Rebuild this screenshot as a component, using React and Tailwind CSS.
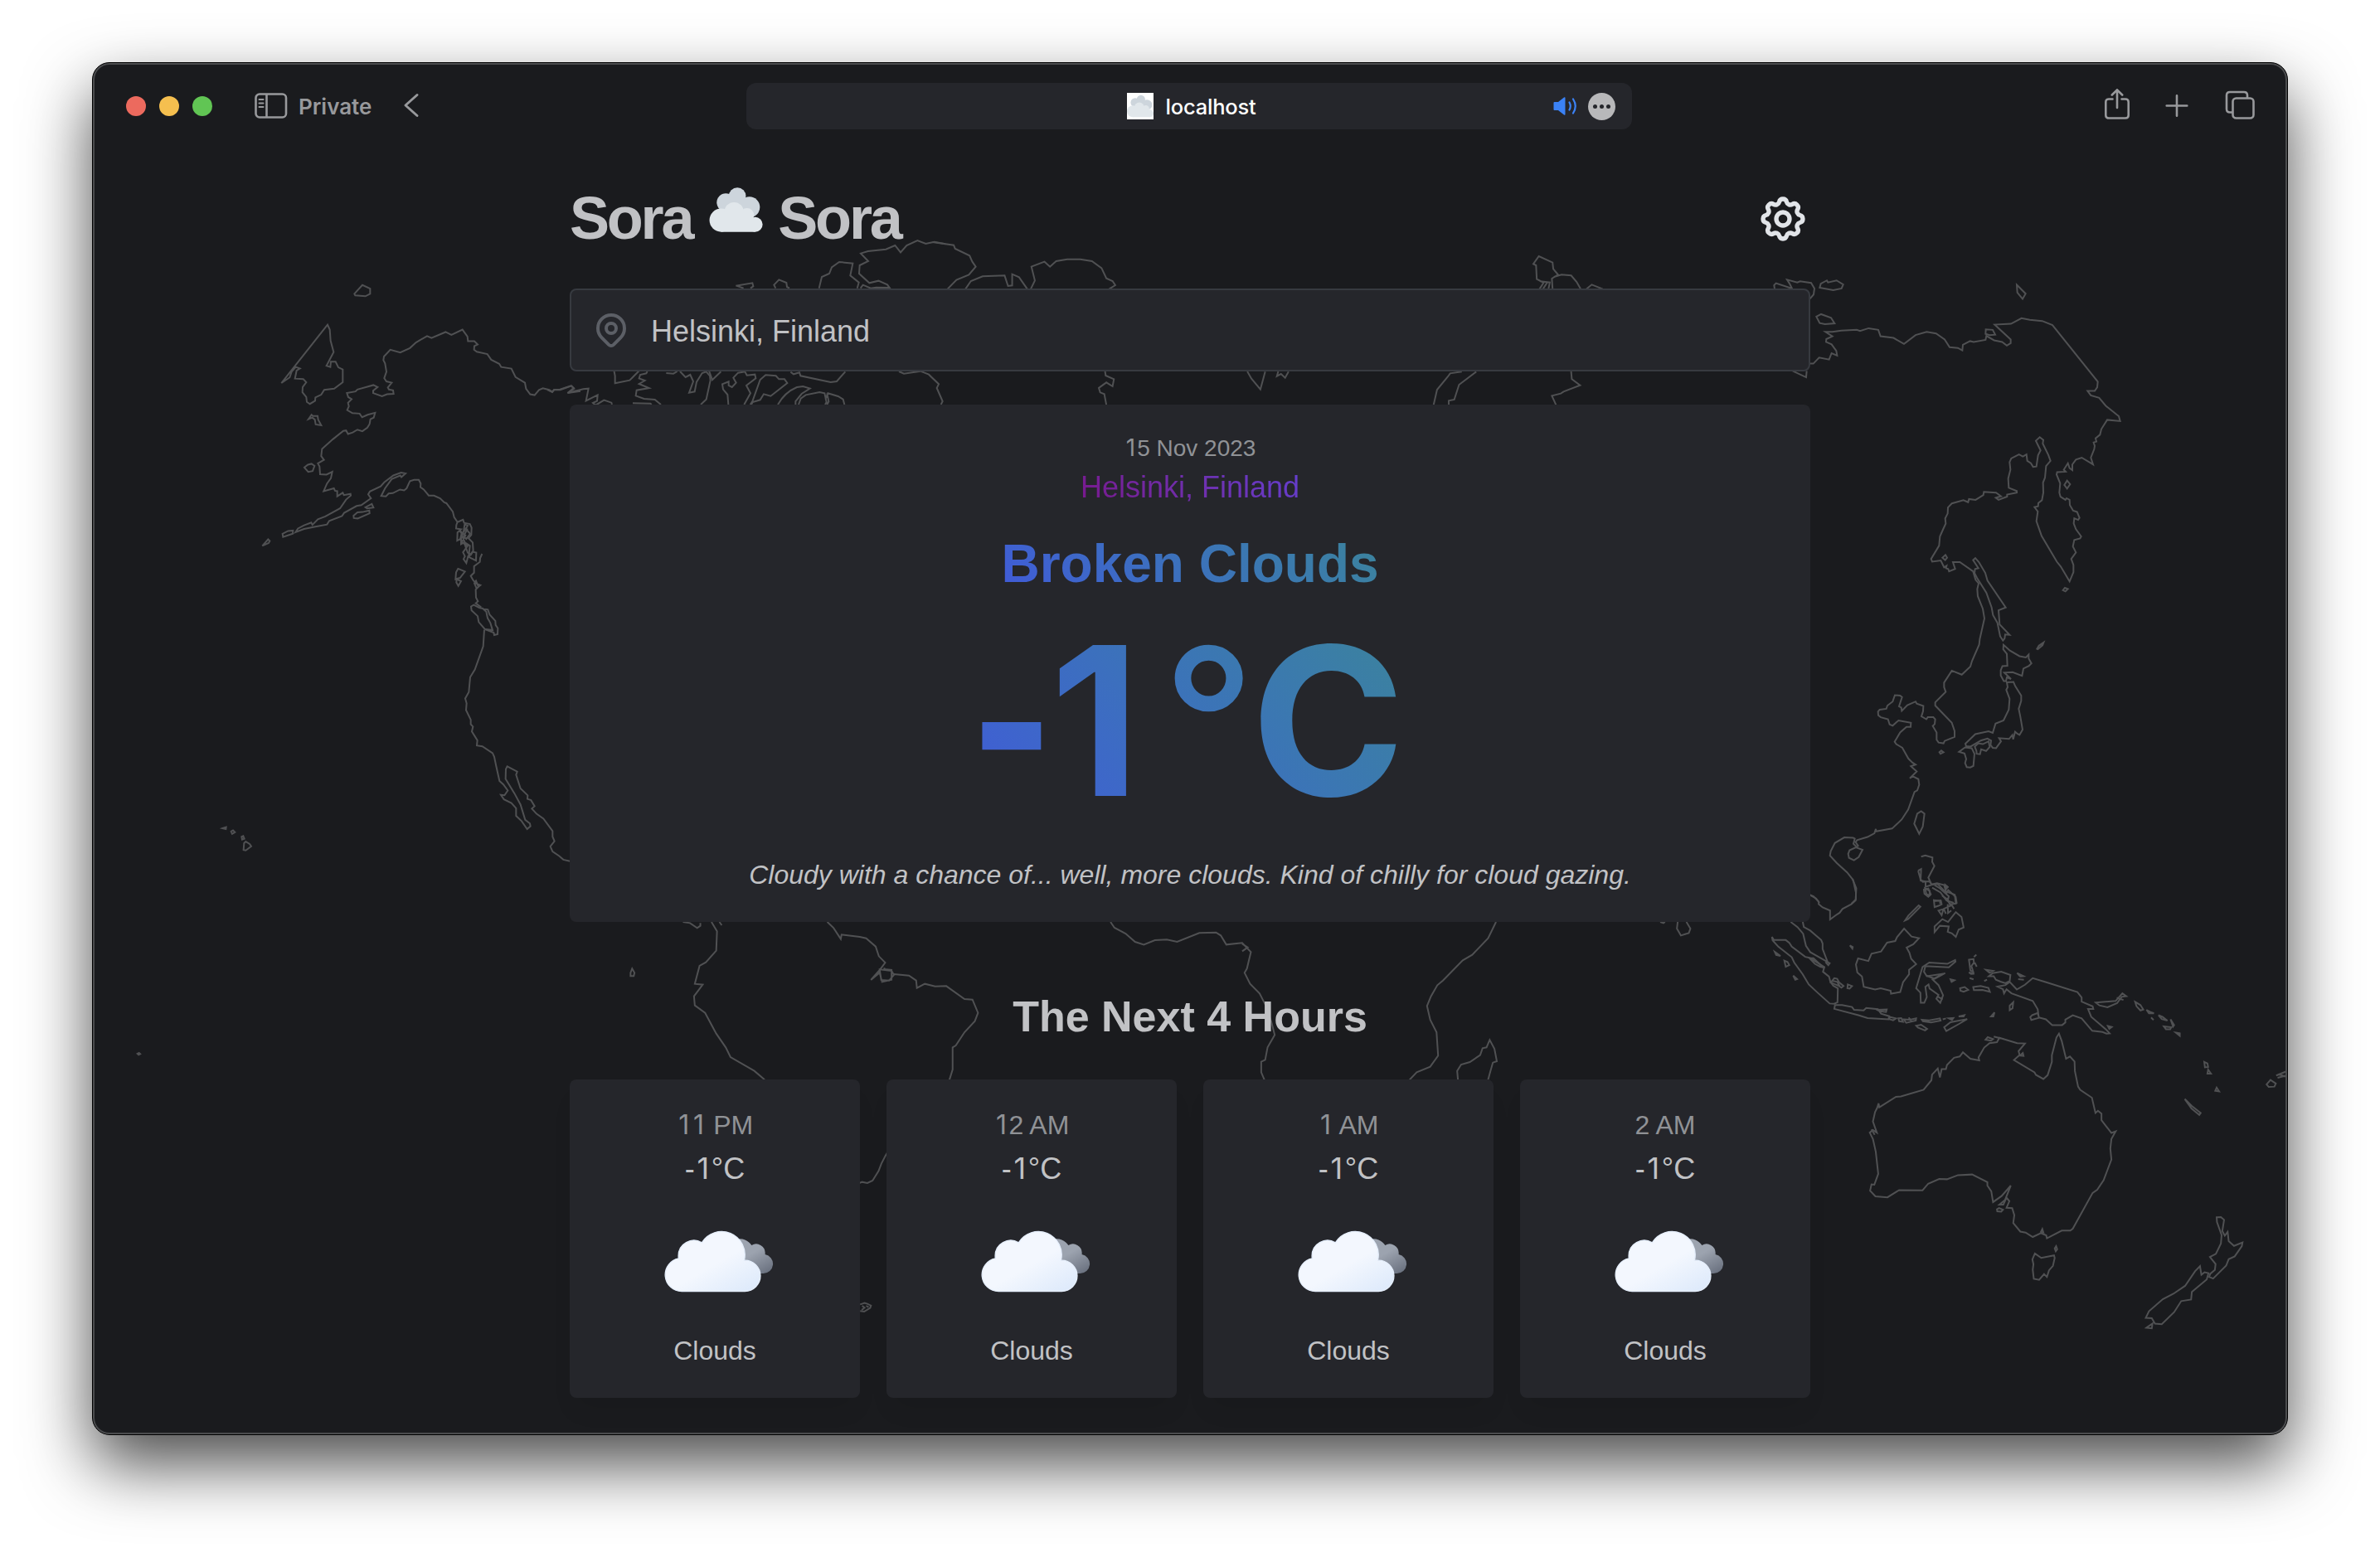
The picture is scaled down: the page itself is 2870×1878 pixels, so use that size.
import React from "react";
import { TbSettings, TbMapPin } from "react-icons/tb";

/* Each coastline group keeps its own local grid; `t` places it on the map. */
const COASTS = [
  {
    t: "translate(200 320) scale(.33333 .48469)",
    d: [
      "M682 71L711 49L739 58V71L722 77L685 75Z",
      "M585 148L593 160L596 188L607 216L581 250L595 253L597 240H614L624 254L640 259V291L609 307L573 310L562 322L541 329L540 337L521 345L510 340L508 328L494 316L495 303L508 291L497 283L467 282L473 262L485 257L470 253L455 265L448 279L418 293L470 248Z",
      "M516 383L527 372L532 375H549L551 384L562 398L542 396L539 384L530 379Z",
      "M1500 313L1453 318L1477 307L1468 300L1427 310H1405L1398 315L1387 310L1364 306L1350 310L1334 323L1318 321L1303 307L1299 292L1265 278L1250 257L1213 253L1206 245L1177 235L1163 221L1125 215L1115 210L1116 201L1128 197L1116 189H1093L1091 177L1073 160L1033 173L1012 166L961 181L945 176L905 192L883 206L848 217L812 210L789 227L787 236L793 244L798 265L790 281L798 289L817 292L803 304L807 309L822 311L824 320L800 321L782 326L750 318V312L766 303L751 298L693 309L686 314L655 318L660 328L672 333L659 342L662 351L656 360L675 368L701 369L710 378L730 372L757 367L752 379L740 383L737 395L729 404L711 413L693 409L676 416L659 420L652 411L642 412L604 433L565 457L562 475L572 484L550 493L556 501L558 520L581 521L602 514L597 530L583 543L571 562L608 555L612 561L620 562V575L640 566L644 572L668 569L669 573L652 583L630 605L577 625L550 632L530 646L526 640L500 647L478 655L469 664L500 656L545 650L583 645L591 636L637 624L645 616L690 599L707 597L742 580L732 570L738 563L777 550L790 540L823 523L851 516L867 518L852 527L848 523L817 532L793 555L779 574L796 575L806 568L821 567L847 558L862 560L871 555L883 537L898 534H915L922 543L921 552L933 558L951 573H970L992 580L1007 590L1015 592L1038 613L1043 627L1055 639",
      "M501 503L514 496L527 494L538 499L531 512L515 514Z",
      "M422 668L442 661L460 660L459 668L424 676Z",
      "M349 698L370 682L376 686L372 691Z",
      "M679 623L693 615L711 614L736 610L737 617L694 630L680 629Z",
      "M722 602L745 594L751 603L728 605Z",
      "M1055 639L1075 633L1079 641L1100 644L1106 653L1105 671L1095 679L1110 690L1112 711L1104 720L1092 715L1079 690L1068 694V680L1054 685L1055 665L1068 657L1050 655L1051 646Z",
      "M1062 660L1084 672L1071 688L1091 699L1075 714L1082 724L1077 731L1087 741L1093 725L1122 735L1123 715L1109 713L1095 727L1100 698L1082 690L1070 671L1092 648L1081 645L1077 663L1064 684L1070 667Z M1084 655L1101 668L1087 681L1077 675L1090 657Z",
      "M1144 718L1137 729L1136 738L1115 749V765L1103 773L1112 784L1123 792L1138 796L1124 804L1116 791L1122 785L1131 800L1121 807L1122 827L1129 836L1121 841L1141 851",
      "M1057 755L1082 762L1064 778L1048 781L1050 764Z M1052 781L1068 786L1058 798L1051 789Z",
      "M1104 849L1114 845L1134 852L1165 857L1171 869L1192 885L1193 895L1201 903L1200 918L1188 920L1186 914L1155 906L1132 888L1128 873L1106 859Z M1145 853L1159 862L1164 878L1174 890L1182 908L1152 905",
      "M1152 907L1148 948L1118 1006L1101 1025L1096 1062L1083 1078L1088 1090L1086 1107L1103 1131V1142L1111 1148L1107 1160L1127 1182L1125 1195L1145 1197L1182 1214L1188 1223L1195 1246L1207 1283L1221 1292L1237 1307L1225 1319L1212 1318L1223 1329L1250 1338L1267 1351V1370L1287 1383L1307 1403L1319 1396L1317 1389L1300 1380L1283 1342L1261 1314L1229 1278L1230 1254L1235 1247L1271 1260L1267 1268L1283 1302L1309 1319L1308 1328L1321 1331L1334 1346L1324 1352L1341 1365L1366 1377L1399 1408V1422L1406 1433L1391 1446L1399 1459L1423 1470L1438 1479L1462 1483",
      "M205 1401L218 1398L217 1403Z M236 1409L243 1406L250 1411L240 1415Z M274 1422L280 1420L284 1427L276 1429Z M283 1438L289 1434L303 1440L309 1446L289 1456L281 1455Z",
    ],
  },
  {
    t: "translate(660 200) scale(.33333)",
    d: [
      "M0 810L18 819L24 810L46 809L85 796L95 804L75 821L130 808L149 806L140 850L182 829L180 851L165 858L175 866L205 848L232 857L234 864",
      "M241 740L245 760V787L298 776L332 742",
      "M362 744L358 751L336 756L332 769L353 777L332 789L368 804L323 812L320 832L350 843L389 846L411 864",
      "M309 859L373 860L377 864",
      "M430 750L456 752L470 744M480 744L500 765L517 756L528 780L513 821L533 817L540 782L560 750L575 745L588 760L590 776L575 845L555 864",
      "M585 742L597 775L628 745",
      "M655 864L652 828L636 809L633 790L656 781V795L668 801L683 785L673 767L690 749L715 745L722 758L751 755L754 769L720 795L735 823L712 864",
      "M734 864L742 852L770 774L790 757L827 760L838 772H858L868 786L808 833L783 826L770 847L743 855L738 864",
      "M834 864C850 835 870 815 903 801L925 798L950 806L920 825L898 852V864",
      "M909 864L917 842L935 829L985 819L1003 823L1010 855L1005 864M1006 845L1015 823L1052 834L1070 845L1075 864M1012 864L1018 853L1012 823",
      "M880 746L891 754L912 748L916 760L1025 783L1047 780L1078 745",
      "M682 434L742 424L745 436L735 443M684 434L710 443",
      "M826 443L820 431L838 412L865 423L867 438L876 443",
      "M983 443L993 402L1020 390L1029 367L1056 348L1105 353L1096 397L1127 422L1121 443M1133 443L1142 431L1170 443L1190 440L1238 441L1230 430L1198 416L1165 424L1128 390L1130 360L1161 345L1134 317L1160 309L1225 302L1258 288L1278 313L1300 288L1339 270L1369 282L1400 275L1440 283",
      "M1272 744L1290 752L1350 743L1380 755L1416 790L1409 804L1430 852L1424 864",
    ],
  },
  {
    t: "translate(680 270) scale(.82908 .33333)",
    d: [
      "M536 66L567 77L569 90L590 115L594 137L599 155L589 184L571 203L558 236",
      "M584 236L592 207L609 190L641 187L646 225L652 223V182L662 193L674 236",
      "M679 236L685 205L680 155L699 137L707 155L716 135L732 128H751L768 135L782 160L789 197L798 207L802 222L793 236",
      "M787 532L788 549L800 562L798 588L789 574L778 594L780 610L786 616L789 655",
      "M994 534L1000 560L1013 599L1020 535M1039 534L1037 551L1043 543L1049 557L1054 535",
      "M1419 236L1425 213L1415 200L1414 150L1410 145L1418 117L1438 140L1439 163L1446 184L1437 198L1438 236M1420 208L1434 212L1432 236M1424 236L1430 213M1440 192L1451 184L1465 187L1473 210L1479 236M1487 236L1495 220L1511 236",
      "M1265 655L1270 600L1286 552L1289 541L1306 535M1327 535L1302 582L1295 636L1287 640V655M1465 534L1466 562L1478 584L1454 607L1450 614L1437 622L1443 655",
    ],
  },
  {
    t: "translate(2100 330) scale(.33333 .48469)",
    d: [
      "M120 38L118 29L125 24L183 37L174 25L165 15L202 22L212 19L252 23L264 37L261 52L247 63",
      "M283 35L287 25L309 17L313 22L344 17L368 27L362 37L332 41Z",
      "M271 107L288 101L324 110L337 124L302 126L283 123Z",
      "M996 28L1028 50L1017 63L998 47Z",
      "M185 242L234 258L236 242M247 224H260L281 209L317 214L326 198L346 204L343 192L326 176L306 170L307 163L329 156L304 145H329L361 142L417 140L429 143L460 136L495 140L503 156L550 160L588 175L630 153L670 145L704 149L735 164L753 183L783 185L799 191L801 177L827 168L840 170L883 165L886 155L914 166L943 170L960 179L974 173V164L916 127L975 125L1013 111L1043 115L1088 118L1125 128L1289 269L1287 283L1278 292H1252L1264 303L1294 309L1318 329L1365 355L1370 367L1323 364L1302 387L1297 401L1281 410L1284 418L1274 420L1278 429L1276 437L1264 458L1272 475L1231 458L1210 463L1197 475V489L1187 484L1181 472L1166 488L1173 493L1142 494L1140 500L1153 522L1150 545L1154 555L1172 563L1176 559L1187 563L1188 576L1200 590L1214 593L1223 608L1218 613L1204 609L1202 622L1210 636L1229 654L1225 659L1204 663L1199 679L1210 694L1193 710L1201 725V743L1187 766L1155 729L1141 717L1086 653L1067 616L1072 592L1060 581L1073 579L1074 571L1087 564L1092 545L1091 520L1098 508L1102 479L1118 466L1110 451L1090 423L1092 414L1079 407L1065 416L1082 440L1073 452L1067 480L1055 481L1047 472L1034 466L1031 450L1018 455L1004 450L976 460L970 469L973 488L965 510L967 533L996 541V545L961 550V555L930 563L920 558L939 554L921 545L877 543L875 551L847 563L823 561L820 569L803 564L761 572L747 582L746 597L737 609L739 622L729 637L718 654L715 677L686 710L690 717L721 714L733 731L742 727L740 733L748 735L751 741L773 735L765 718L790 718L838 741L847 762L858 771L853 785L855 803L873 834L879 858L862 910L860 923L834 964L828 978L797 998L761 988L733 1018V1029L739 1041L701 1067V1075L761 1118L771 1138V1153L735 1163L731 1169L713 1167L706 1160V1142L692 1126L699 1121L701 1109L694 1104H674L669 1109L651 1102L657 1089L658 1076L634 1070L630 1065L600 1074L580 1088L578 1080L570 1077L581 1054L574 1050L555 1049L547 1065L528 1075L524 1083L500 1085L494 1090L495 1099L504 1104L530 1109L536 1122L547 1125L568 1112L613 1118L612 1128H597L574 1142L554 1165L560 1171L582 1180L604 1207L619 1217L630 1222L613 1226L634 1239L609 1256L620 1251L640 1258L643 1272L636 1286L626 1290L603 1334L584 1354L579 1359L545 1381L487 1388L486 1382L481 1393L456 1402L418 1410L413 1415L422 1424L417 1427L405 1419L410 1406L404 1404L372 1403L338 1417L323 1437L320 1448L345 1467L382 1490L404 1509L414 1540V1557L398 1568",
      "M883 150L884 139L909 140L918 152L898 153Z",
      "M1168 526L1178 515L1189 524L1178 535Z",
      "M1163 788L1170 782L1181 785L1172 791Z",
      "M727 707L738 700L744 707L737 713Z",
      "M838 713L846 708L859 718L882 745L890 764L956 831L930 838L934 873L970 899L954 898L952 908L946 913L936 903L926 869L910 850L905 831L886 794L852 757L843 745L845 735L857 733Z",
      "M1069 934L1076 926L1093 918L1089 925L1072 935Z",
      "M948 924L971 938L1006 952L1029 955L1039 948V958L1049 970L1040 976L1020 983L1015 1001L981 992L951 993L975 1009L960 1005L957 1014L949 1014L938 1000V987L944 977L962 976L960 946L947 935Z",
      "M960 1017L984 1016L990 1026L1012 1050V1063L1003 1083L1009 1103L1017 1135L1006 1148L998 1145L990 1140L983 1159L980 1148L968 1158L932 1156L939 1164L921 1181L909 1180L901 1173L903 1162L890 1157L866 1162L829 1177L813 1176L810 1170L846 1146L894 1139L909 1143L919 1120L948 1112L967 1085L970 1058L958 1036L963 1029Z",
      "M844 1177L857 1169L873 1171L894 1164L898 1178L885 1188L867 1184L863 1196L851 1195L850 1188Z",
      "M787 1190L809 1179L833 1181L843 1195L839 1225L828 1229L815 1228L809 1218L813 1208L807 1194Z",
      "M716 1191L723 1187L731 1191L720 1195Z",
      "M625 1369L636 1344L650 1338L662 1344L656 1376L643 1394Z",
      "M386 1444L391 1435L414 1428L438 1434L424 1452L407 1460L389 1454Z",
      "M247 1546L270 1555L282 1566",
      "M650 1451L665 1448L691 1453L690 1464L698 1474L676 1503L688 1521L710 1519L742 1542L748 1534L775 1551L779 1568M639 1486L650 1482L648 1510L666 1513V1526L688 1521M639 1486L650 1512M660 1533L676 1530L685 1545L676 1551L662 1543ZM690 1528L720 1540L742 1560L768 1566M697 1562L720 1560L718 1568M738 1522L746 1526L741 1531Z",
    ],
  },
  {
    t: "translate(2100 1060) scale(.4273 .38265)",
    d: [
      "M313 0L324 30L322 68L310 80L285 95L277 107L266 115L250 128V100L229 90L218 80V72L203 55L192 50",
      "M139 136L158 152L174 173L182 211L194 231L243 262L229 221V204L225 193L194 163L176 152L173 136M243 262L249 266L245 272L237 262",
      "M86 183L91 192L125 193L135 202L142 214L180 246L192 249L234 278L230 293L247 308L251 325L259 337L272 345L271 389L262 394L249 393L215 359L190 333L173 301L149 264L142 247L104 214L88 194Z",
      "M192 250L203 250L232 280L222 277L207 268ZM252 327L262 313L270 315L276 327L288 338L282 343L274 337L265 333ZM255 321L270 325L278 340",
      "M94 230L103 237L110 243L98 240ZM121 258L130 262L135 272L125 277ZM146 305L157 316L152 318ZM306 210L314 215L313 220ZM300 333L312 338L305 346L299 345Z",
      "M264 398L262 410L330 430L356 439L415 443L417 433L394 425L385 411L352 407L345 415L318 413L312 404L284 398ZM383 413L410 412L408 420L389 417Z",
      "M420 436L436 440L428 446L417 442ZM443 440L451 439L456 451L445 449ZM458 443L475 444L493 440L492 447L465 454ZM472 437L480 450ZM509 444L530 446L560 440L562 447L535 453L512 449ZM493 463L507 460L524 473L518 478L498 469ZM572 468L590 452L637 442L613 458L578 480ZM568 443L577 440ZM585 440L598 439L594 445ZM613 434L629 430L627 434Z",
      "M329 251L323 270L327 295L340 308L345 340L377 349L393 345L421 353L422 362L448 357L456 326L473 301V287L493 269L479 252L474 233L466 217L485 206L501 187L480 182L459 157L439 184L434 196L411 201L394 229L367 236L358 259Z",
      "M462 131L471 116L500 84L505 88L470 127Z",
      "M504 0L512 10L530 8L536 16M518 30L531 38L531 52L522 48ZM538 17L552 14L572 20L577 40L602 50L605 78L592 80L600 95M545 20L560 30L585 55L582 70L592 83M576 20L582 26L577 30ZM543 67L563 70L565 80L556 85L545 89ZM566 53L582 65L590 85L570 95L565 115L556 100L571 95L577 110M582 80L583 108L592 100",
      "M605 105L621 120L627 153L613 160L605 183L594 172L582 167L585 150L560 148L545 168L545 150L567 127L583 136L597 116Z",
      "M511 278L530 264L581 268L603 256L604 261L585 279L519 275L515 293L523 307L570 299L539 317L556 335L569 367L561 391L550 378L556 366L531 346L528 333L519 340L523 373L516 391H506L505 359L493 345Z",
      "M522 305L545 315L575 297M552 370L568 380",
      "M590 317L601 320L593 325ZM617 345L630 341L640 350L627 356L618 353ZM654 341L675 338L697 344L701 356L680 350L656 351ZM642 255L655 253L656 264L649 275L654 293L646 289ZM663 239L656 246ZM658 264L664 277ZM642 295L657 299L648 300ZM690 287L710 290L700 296ZM644 313L655 317ZM685 322L693 318ZM757 400L767 389L765 408L757 414ZM704 434L714 421L711 434ZM778 297L796 307L787 308ZM781 316L797 318Z",
      "M698 307L709 297L733 293L759 303L757 322L745 329L731 324L718 318L712 307ZM723 340L745 335L757 325L777 349L800 334L822 313L860 326L948 357L960 374V387L991 402L993 410H978L987 435L1028 474L1039 487L1030 488L1019 483L990 479L960 440L935 430L914 444V453L905 461H877L859 443L839 437L836 411L822 385L762 361L748 348L741 361L738 348ZM820 430L836 423L840 438L818 445L815 436ZM1034 464L1045 467L1038 473Z",
      "M1000 390L1056 385L1075 361L1086 370L1073 372L1060 392L1033 405L1010 399ZM1059 375L1078 382ZM1111 388L1126 398L1134 412L1126 415L1115 402ZM1143 413L1153 419L1164 424L1150 424ZM1177 430L1188 435L1202 447L1186 442ZM1156 437L1163 445ZM1211 443L1221 461L1218 466ZM1192 465L1213 468L1210 474L1198 474ZM1226 485L1237 487L1237 495Z",
      "M363 983L367 963L375 964L386 930L379 860L371 820L362 800L371 792L382 800L371 765L377 735L383 722L387 708L389 720L436 687L450 686L514 665L536 635L538 617L554 598L560 626L565 600L577 600L580 587L600 564L616 560L625 547L646 567L671 572L669 563L685 532L700 518L721 515L728 501L778 518L800 519L782 543L785 555L769 571L827 610L831 618L852 631L864 619L876 577V556L889 500L896 488L904 512L916 567L927 560L940 576L941 606L950 655L956 665L989 690L999 738L1006 731L1016 740V761L1044 801L1056 796L1044 820L1041 850L1044 885L1022 950L1004 980L991 990L935 1103L928 1109H904L862 1133L860 1124L845 1117L822 1129L802 1115L787 1112L767 1085L770 1060L764 1038L748 1037L756 1016L748 1005L739 1027L728 1027L744 1012L760 967L734 1000L710 1019L705 985L694 967V956L651 932L611 934L580 947L558 946L527 961L511 982L445 981L412 1004L378 1001Z",
      "M689 507L695 499L710 505L704 510ZM712 497L732 503ZM786 557L794 549L796 558ZM721 1042L727 1038L738 1043L733 1049L722 1048ZM367 790L376 807ZM845 1113L849 1104L852 1115ZM884 1165L888 1158L891 1168L887 1174Z",
      "M828 1181L846 1195L882 1187L884 1195L879 1220L868 1234L862 1255L854 1246L840 1264L825 1261L822 1232L824 1215L821 1200Z",
      "M1341 1067L1353 1066L1362 1075L1357 1110L1364 1125L1372 1113L1375 1142L1390 1157L1414 1146L1412 1158L1392 1190L1375 1199L1368 1219L1331 1260L1320 1255L1323 1245L1336 1233L1338 1214L1322 1192L1339 1182L1353 1150L1355 1123L1342 1082Z",
      "M1294 1221L1280 1237L1252 1283L1219 1308L1189 1325L1150 1363L1141 1384L1158 1385L1167 1402L1186 1404L1221 1366L1241 1331L1269 1326L1271 1302L1313 1263L1318 1243L1307 1240L1298 1248ZM1143 1415L1160 1402L1158 1417Z",
      "M1306 577L1315 582L1317 593L1308 594ZM1317 601L1325 614L1315 614ZM1341 658L1348 670L1337 668ZM1251 694L1271 716L1296 738L1292 744L1270 724ZM1482 648L1493 634L1508 645L1504 655L1488 656ZM1509 620L1538 607M1513 627L1538 620M1515 616L1538 624",
    ],
  },
  {
    t: "translate(680 1090) scale(.95663 .33333)",
    d: [
      "M150 66L159 70L168 88L172 80V70M186 66L193 100L192 170L179 212L171 225L165 290L175 293L164 335L165 368L178 395L192 470L204 520L210 555L240 605L253 637M196 66L199 78",
      "M332 66L340 88L349 128L350 112L373 120L381 125L393 155L397 190L405 213L398 240L387 276L398 250L401 283L413 275V240L404 237V232M416 255L435 260L444 278L445 305L455 290L468 299L482 298L505 345L515 347L522 395L518 425L505 465L494 513L490 520V600L486 637M398 238L413 243L416 258L410 278L400 276Z",
      "M689 66L694 87L708 108L720 138L731 148L745 132L760 130L773 138L801 106L822 104L828 115L835 148L855 142L866 175L861 235L858 250L865 290L877 325L885 370L892 430L896 475L887 520L884 565L879 572V610L883 637M855 145L862 158L855 172",
      "M1175 66L1165 125L1145 185L1133 205L1108 278L1101 295L1093 335L1088 370L1092 420L1100 465L1102 550L1092 590L1075 610L1066 637",
      "M1127 637L1126 605L1131 582L1142 573L1155 548L1158 523L1163 520L1167 493L1173 525L1176 570L1171 575L1168 605L1165 637",
      "M1404 66L1403 90L1408 115L1418 106L1420 90L1415 66M1382 66L1386 70L1388 66",
      "M84 250L86 235L89 250L88 262L84 262Z",
    ],
  },
  {
    t: "translate(680 1290) scale(.48469 .33333)",
    d: [
      "M735 411L742 407L755 411L768 402L783 367L790 340L800 312L805 300M737 850L748 845L755 848L764 854L762 863L747 876L737 874M742 855L748 862L741 870M752 855L758 860",
      "M-1061 -57L-1057 -60L-1054 -56L-1058 -53Z",
    ],
  },
];

function WorldMap() {
  return (
    <svg
      className="pointer-events-none absolute -left-px -top-px h-[1656px] w-[2648px]"
      viewBox="111 75 2648 1656"
      fill="none"
      stroke="#505153"
      strokeWidth="2"
    >
      {COASTS.map((c) => (
        <g key={c.t} transform={c.t}>
          {c.d.map((d, i) => (
            <path key={i} d={d} vectorEffect="non-scaling-stroke" />
          ))}
        </g>
      ))}
    </svg>
  );
}

function DoubleCloud({ className }) {
  return (
    <svg className={className} viewBox="590 75 194 163">
      <g fill="#cdd5dc">
        <circle cx="650" cy="130" r="33" />
        <circle cx="692" cy="107" r="31" />
        <circle cx="736" cy="147" r="38" />
        <path d="M640 120H740V190H640Z" />
      </g>
      <g fill="#e1e7eb">
        <circle cx="633" cy="194.500" r="42.500" />
        <circle cx="680" cy="164" r="35" />
        <circle cx="727" cy="176" r="25.500" />
        <circle cx="757" cy="210" r="27" />
        <path d="M633 170H740V200H757V237H633Z" />
      </g>
    </svg>
  );
}

function OvercastIcon({ id }) {
  return (
    <svg className="mr-[5px] -mb-px size-[171px] shrink-0" viewBox="0 0 64 64">
      <defs>
        <linearGradient id={id + "b"} x1="40.760" y1="23" x2="50.830" y2="40.460" gradientUnits="userSpaceOnUse">
          <stop offset="0" stopColor="#9ca3af" />
          <stop offset=".45" stopColor="#9ca3af" />
          <stop offset="1" stopColor="#6b7280" />
        </linearGradient>
        <linearGradient id={id + "f"} x1="22.560" y1="21.960" x2="39.200" y2="50.800" gradientUnits="userSpaceOnUse">
          <stop offset="0" stopColor="#f3f7fe" />
          <stop offset=".45" stopColor="#f3f7fe" />
          <stop offset="1" stopColor="#deeafb" />
        </linearGradient>
      </defs>
      <path
        fill={"url(#" + id + "b)"}
        d="M34.23 33.45a4.05 4.05 0 004.05 4h16.51a4.34 4.34 0 00.81-8.61 3.52 3.52 0 00.06-.66 4.06 4.06 0 00-6.13-3.48 6.08 6.08 0 00-11.25 3.19 6.34 6.34 0 00.18 1.46h-.18a4.05 4.05 0 00-4.05 4.1z"
      />
      <path
        fill={"url(#" + id + "f)"}
        stroke="#e6effc"
        strokeWidth=".5"
        d="M46.5 31.5h-.32a10.49 10.49 0 00-19.11-8 7 7 0 00-10.57 6 7.21 7.21 0 00.1 1.14A7.5 7.5 0 0018 45.5a4.19 4.19 0 00.5 0v0h28a7 7 0 000-14z"
      />
    </svg>
  );
}

function Toolbar() {
  return (
    <div className="relative grid h-[104px] grid-cols-[788px_1068px_1fr] items-center font-['Inter',sans-serif] text-[#98999c]">
      <div className="flex items-center pl-10">
        <div className="flex gap-4">
          <span className="size-6 rounded-full bg-[#ec6a5e]" />
          <span className="size-6 rounded-full bg-[#f5bf4f]" />
          <span className="size-6 rounded-full bg-[#61c554]" />
        </div>
        <svg className="mb-px ml-[51px] h-8 w-10" viewBox="0 0 40 32" fill="none" stroke="currentColor" strokeWidth="2.600">
          <rect x="1.500" y="1.500" width="36.500" height="28" rx="4.500" />
          <path d="M14.500 1.500V29.500" />
          <path d="M5.500 8H10.500M5.500 12.500H10.500M5.500 17H10.500" strokeWidth="2" strokeLinecap="round" />
        </svg>
        <span className="ml-[13px] mt-px text-[26px] leading-8 font-semibold">Private</span>
        <svg className="ml-[38px] h-8 w-5" viewBox="0 0 20 32" fill="none" stroke="currentColor" strokeWidth="3" strokeLinecap="round" strokeLinejoin="round">
          <path d="M17 2.500L3 15L17 27.500" />
        </svg>
      </div>
      <div className="grid h-14 grid-cols-[1fr_auto_1fr] items-center rounded-xl bg-[#25262b]">
        <span />
        <div className="ml-[6px] flex items-center gap-[14px]">
          <span className="grid size-8 place-items-center bg-white">
            <DoubleCloud className="h-7 w-8" />
          </span>
          <span className="mt-px text-[25.500px] leading-8 font-medium tracking-[-0.2px] text-white">localhost</span>
        </div>
        <div className="flex items-center justify-end gap-3 pr-5">
          <svg className="h-6 w-[31px]" viewBox="0 0 31 24" fill="none" stroke="#3b82f6" strokeWidth="2.200" strokeLinecap="round">
            <path d="M1.500 8Q1.500 7 2.500 7H7L14 1.500Q15.500 .8 15.500 2V22Q15.500 23.200 14 22.500L7 17H2.500Q1.500 17 1.500 16Z" fill="#3b82f6" stroke="none" />
            <path d="M20.500 7.500Q23 12 20.500 16.500M25 3.500Q30.500 12 25 20.500" />
          </svg>
          <svg className="size-[33px]" viewBox="0 0 33 33">
            <circle cx="16.500" cy="16.500" r="16.500" fill="#b8b8ba" />
            <g fill="#25262b">
              <circle cx="8.500" cy="16.500" r="2.500" />
              <circle cx="16.500" cy="16.500" r="2.500" />
              <circle cx="24.500" cy="16.500" r="2.500" />
            </g>
          </svg>
        </div>
      </div>
      <div className="flex items-center justify-end pr-[38px]">
        <svg className="mb-[2px] h-10 w-8" viewBox="0 0 32 40" fill="none" stroke="currentColor" strokeWidth="2.600" strokeLinecap="round" strokeLinejoin="round">
          <path d="M10.500 12.500H6Q2.300 12.500 2.300 16V32Q2.300 35.500 6 35.500H26Q29.700 35.500 29.700 32V16Q29.700 12.500 26 12.500H21.500M16 23V1.500M9.800 7.500L16 1.300L22.200 7.500" />
        </svg>
        <svg className="mb-px ml-[41px] mr-px size-[30px]" viewBox="0 0 30 30" fill="none" stroke="currentColor" strokeWidth="2.600" strokeLinecap="round">
          <path d="M15 2.200V26.800M2.700 14.500H27.300" />
        </svg>
        <svg className="mb-[2px] ml-[42px] h-9 w-[37px]" viewBox="0 0 37 36" fill="none" stroke="currentColor" strokeWidth="2.600" strokeLinejoin="round">
          <rect x="9.500" y="9.500" width="25" height="24" rx="4" />
          <path d="M9.500 26.500H6Q2 26.500 2 22.500V6Q2 2 6 2H23Q27 2 27 6V9.500" />
        </svg>
      </div>
    </div>
  );
}

/* Sets every "1" in a footless face, one figure wide. */
function Figures({ children }) {
  return children.split(/(1)/).map((part, i) =>
    part === "1" ? (
      <span key={i} className="inline-block w-[0.556em] text-center font-['Inter',sans-serif] leading-none">
        1
      </span>
    ) : (
      part
    )
  );
}

const HOURS = [
  { time: "11 PM", temp: "-1°C", sky: "Clouds" },
  { time: "12 AM", temp: "-1°C", sky: "Clouds" },
  { time: "1 AM", temp: "-1°C", sky: "Clouds" },
  { time: "2 AM", temp: "-1°C", sky: "Clouds" },
];

function HourCard({ time, temp, sky, id }) {
  return (
    <div className="flex h-[384px] flex-col items-center rounded-lg bg-[#25262b] pt-[30px] shadow-[0_20px_28px_-8px_rgba(0,0,0,0.08)]">
      <div className="h-[50px] text-[32px] leading-[50px] text-[#909296]">
        <Figures>{time}</Figures>
      </div>
      <div className="h-[54px] text-[36px] leading-[56px]">
        <Figures>{temp}</Figures>
      </div>
      <OvercastIcon id={id} />
      <div className="text-[32px] leading-[46px]">{sky}</div>
    </div>
  );
}

export default function App() {
  return (
    <div className="h-[1878px] w-[2870px] overflow-hidden bg-white pl-[111px] pt-[75px]">
      <div className="h-[1656px] w-[2648px] rounded-[21px] shadow-[0_36px_80px_rgba(0,0,0,0.7)]">
        <div className="relative h-full w-full overflow-hidden rounded-[21px] border border-black bg-[#1a1b1e] font-['Liberation_Sans',Arial,sans-serif] text-[#c1c2c5]">
          <WorldMap />
          <Toolbar />
          <main className="relative ml-[575px] w-[1496px]">
            <header className="mt-[41px] flex h-[84px] items-center justify-between">
              <h1 className="flex items-center text-[72px] leading-[84px] font-bold tracking-[-3.200px]">
                <span>Sora</span>
                <DoubleCloud className="mb-[20px] ml-[21px] mr-[18px] h-[54px] w-[65px]" />
                <span>Sora</span>
              </h1>
              <TbSettings className="mr-px mt-[2px] size-16 text-[#e1e4e8]" />
            </header>
            <div className="mt-[43px] flex h-[100px] items-center rounded-lg border-2 border-[#373a40] bg-[#25262b] pl-6">
              <TbMapPin className="size-12 text-[#5c5f66]" />
              <span className="ml-[24px] mt-[3px] text-[36px] leading-[54px]">Helsinki, Finland</span>
            </div>
            <section className="mt-10 flex h-[624px] flex-col items-center rounded-lg bg-[#25262b] pt-[31px]">
              <div className="h-[42px] text-[28px] leading-[44px] text-[#909296]">
                <Figures>15 Nov 2023</Figures>
              </div>
              <div className="bg-linear-45 from-[#78148a] to-[#633fd0] bg-clip-text text-[36px] leading-[54px] text-transparent">
                Helsinki, Finland
              </div>
              <div className="mt-5 bg-linear-45 from-[#4159d9] to-[#3c849a] bg-clip-text text-[64px] leading-[90px] font-bold text-transparent">
                Broken Clouds
              </div>
              <div className="mt-[10px] flex h-[264px] items-baseline bg-linear-45 from-[#4159d9] to-[#3c849a] bg-clip-text leading-[256px] font-bold text-transparent">
                <span className="flex w-[85px] justify-center text-[279px]">-</span>
                <span className="flex w-[116px] justify-center font-['Inter',sans-serif] text-[250px]">1</span>
                <span className="flex w-[158px] justify-center text-[262px]">°</span>
                <span className="flex w-[156px] justify-center pr-[26px] font-['Inter',sans-serif] text-[250px]">C</span>
              </div>
              <div className="mt-[31px] text-[32px] leading-[50px] italic">
                Cloudy with a chance of... well, more clouds. Kind of chilly for cloud gazing.
              </div>
            </section>
            <h2 className="mt-[78px] text-center text-[52px] leading-[72px] font-bold">The Next 4 Hours</h2>
            <div className="mt-10 grid grid-cols-4 gap-8">
              {HOURS.map((h, i) => (
                <HourCard key={h.time} id={"sky" + i} {...h} />
              ))}
            </div>
          </main>
          <div className="pointer-events-none absolute inset-0 rounded-[20px] border-2 border-[#4b4c4e]" />
        </div>
      </div>
    </div>
  );
}
